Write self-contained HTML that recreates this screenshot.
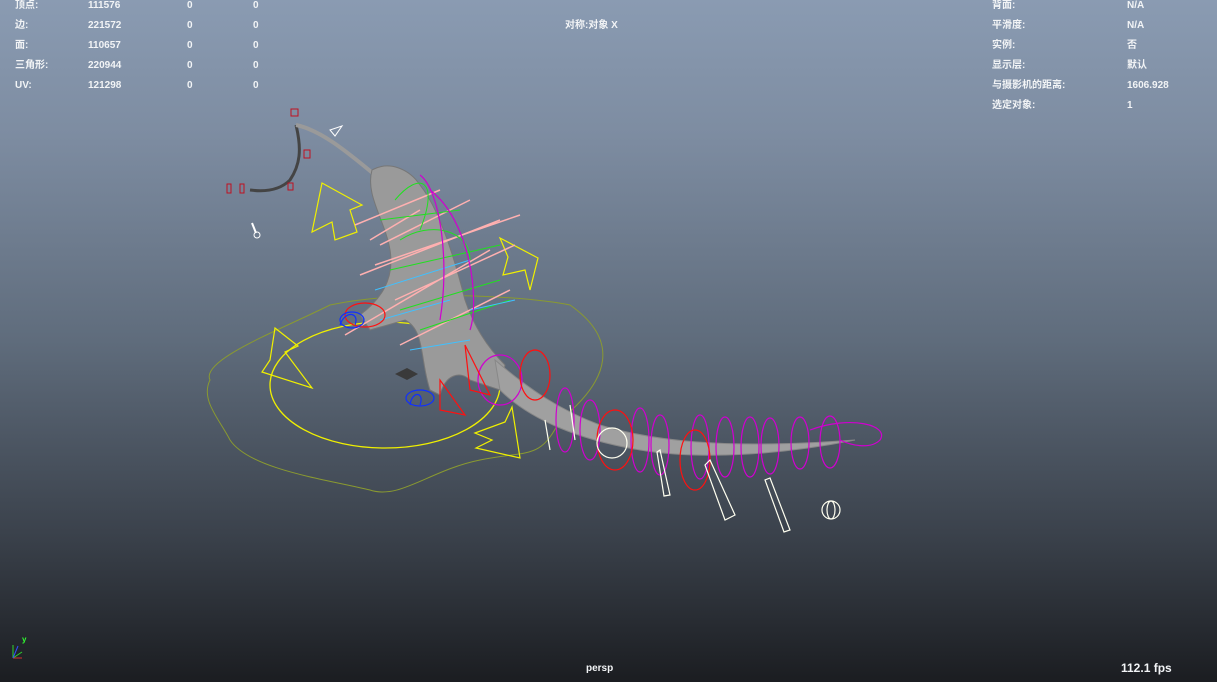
<!DOCTYPE html>
<html><head><meta charset="utf-8"><style>
html,body{margin:0;padding:0}
body{width:1217px;height:682px;overflow:hidden;position:relative;background:linear-gradient(#8a9bb2 0%,#7d8ca1 20%,#5f6c7c 50%,#3b424c 78%,#1b1d21 100%);font-family:"Liberation Sans","Noto Sans CJK SC",sans-serif;font-size:10px;font-weight:bold;color:#f2f4f6}
.t{position:absolute;white-space:nowrap;line-height:12px}
</style></head><body>
<div class="t" style="left:15px;top:0">顶点:</div><div class="t" style="left:88px;top:0">111576</div><div class="t" style="left:187px;top:0">0</div><div class="t" style="left:253px;top:0">0</div>
<div class="t" style="left:15px;top:20px">边:</div><div class="t" style="left:88px;top:20px">221572</div><div class="t" style="left:187px;top:20px">0</div><div class="t" style="left:253px;top:20px">0</div>
<div class="t" style="left:15px;top:40px">面:</div><div class="t" style="left:88px;top:40px">110657</div><div class="t" style="left:187px;top:40px">0</div><div class="t" style="left:253px;top:40px">0</div>
<div class="t" style="left:15px;top:60px">三角形:</div><div class="t" style="left:88px;top:60px">220944</div><div class="t" style="left:187px;top:60px">0</div><div class="t" style="left:253px;top:60px">0</div>
<div class="t" style="left:15px;top:80px">UV:</div><div class="t" style="left:88px;top:80px">121298</div><div class="t" style="left:187px;top:80px">0</div><div class="t" style="left:253px;top:80px">0</div>
<div class="t" style="left:565px;top:20px">对称:对象 X</div>
<div class="t" style="left:992px;top:0">背面:</div><div class="t" style="left:1127px;top:0">N/A</div>
<div class="t" style="left:992px;top:20px">平滑度:</div><div class="t" style="left:1127px;top:20px">N/A</div>
<div class="t" style="left:992px;top:40px">实例:</div><div class="t" style="left:1127px;top:40px">否</div>
<div class="t" style="left:992px;top:60px">显示层:</div><div class="t" style="left:1127px;top:60px">默认</div>
<div class="t" style="left:992px;top:80px">与摄影机的距离:</div><div class="t" style="left:1127px;top:80px">1606.928</div>
<div class="t" style="left:992px;top:100px">选定对象:</div><div class="t" style="left:1127px;top:100px">1</div>
<div class="t" style="left:586px;top:663px">persp</div>
<div class="t" style="left:1121px;top:662px;font-size:12px">112.1 fps</div>
<svg width="1217" height="682" style="position:absolute;left:0;top:0" fill="none">
<path d="M13 658V645M13 658L22 652" stroke="#30d030" stroke-width="1"/><path d="M13 658H22" stroke="#d03030"/><path d="M13 658L18 646" stroke="#3050ff"/>
<text x="22" y="642" fill="#30ff30" font-size="8" font-family="Liberation Sans">y</text>
<path d="M210 380C200 360 280 330 330 305C400 290 520 295 570 305C620 340 610 380 560 420C540 460 530 450 480 460C430 470 400 500 370 490C330 480 250 470 230 440C220 420 200 400 210 380Z" stroke="#8a9a30" stroke-width="1"/>
<ellipse cx="385" cy="385" rx="115" ry="63" stroke="#f0f000" stroke-width="1.3"/>
<path d="M322 183L362 205L350 210L357 232L335 240L332 222L312 232ZM500 238L538 258L530 290L525 270L503 275L508 257ZM275 328L298 346L285 352L312 388L262 372L270 360ZM475 433L505 422L512 407L520 458L476 448L492 440Z" stroke="#f0f000" stroke-width="1.2"/>
<path d="M296 125C302 150 300 165 290 180C280 190 265 192 250 190" stroke="#444" stroke-width="3"/>
<path d="M296 125C320 130 345 150 375 175" stroke="#9a9a9a" stroke-width="4"/>
<g stroke="#c01020" stroke-width="1"><rect x="291" y="109" width="7" height="7"/><rect x="227" y="184" width="4" height="9"/><rect x="240" y="184" width="4" height="9"/><rect x="304" y="150" width="6" height="8"/><rect x="288" y="183" width="5" height="7"/></g>
<path d="M330 130L342 126L335 136Z" stroke="#fff"/><path d="M252 223L256 233" stroke="#fff" stroke-width="2"/><circle cx="257" cy="235" r="3" stroke="#fff"/>
<path d="M372 170C390 160 410 170 420 185C440 210 455 260 465 300C475 330 490 350 505 365L500 390L470 380C460 370 445 375 440 395L430 390C420 360 425 330 405 320L370 330L360 315C380 300 395 280 390 250C385 220 365 195 372 170Z" fill="#9a9a9a" stroke="#777"/>
<path d="M495 360C530 390 560 410 600 425C650 440 720 450 855 440C780 455 700 460 640 450C580 440 530 420 500 390Z" fill="#a0a0a0" stroke="#888"/>
<g stroke="#ffb0b0" stroke-width="1.5">
<path d="M360 275L500 220M380 245L470 200M345 335L490 250M395 300L515 245M400 345L510 290M370 240L420 210M355 225L440 190M375 265L520 215"/></g>
<g stroke="#20e020" stroke-width="1"><path d="M380 220L460 210M390 270L500 245M400 310L500 280M420 330L510 300M395 200C420 170 440 180 420 230M400 240C430 220 470 230 470 260"/></g>
<g stroke="#40c0ff" stroke-width="1"><path d="M375 290L470 260M380 320L450 300M410 350L470 340M470 310L515 300"/></g>
<g stroke="#d000d0" stroke-width="1.2">
<path d="M420 175C440 190 450 260 440 320M430 190C470 220 480 300 470 330"/>
<ellipse cx="565" cy="420" rx="9" ry="32"/><ellipse cx="590" cy="430" rx="10" ry="30"/>
<ellipse cx="640" cy="440" rx="9" ry="32"/><ellipse cx="660" cy="445" rx="9" ry="30"/>
<ellipse cx="700" cy="447" rx="9" ry="32"/><ellipse cx="725" cy="447" rx="9" ry="30"/>
<ellipse cx="750" cy="447" rx="9" ry="30"/><ellipse cx="770" cy="446" rx="9" ry="28"/>
<ellipse cx="800" cy="443" rx="9" ry="26"/><ellipse cx="830" cy="442" rx="10" ry="26"/>
<path d="M810 430C850 415 890 425 880 440C870 450 850 445 840 440"/><ellipse cx="500" cy="380" rx="22" ry="25"/></g>
<g stroke="#ff1010" stroke-width="1.2"><ellipse cx="365" cy="315" rx="20" ry="12"/><ellipse cx="535" cy="375" rx="15" ry="25"/><ellipse cx="615" cy="440" rx="18" ry="30"/><ellipse cx="695" cy="460" rx="15" ry="30"/><path d="M440 380L465 415L440 410ZM465 345L490 395L470 390Z"/></g>
<g stroke="#1030ff" stroke-width="1.2"><ellipse cx="352" cy="320" rx="12" ry="8"/><ellipse cx="420" cy="398" rx="14" ry="8"/><path d="M340 325C345 310 360 312 355 325M410 405C412 390 425 392 420 405"/></g>
<g stroke="#fffff0" stroke-width="1.2"><circle cx="612" cy="443" r="15"/><path d="M660 450L670 495L664 496L657 452ZM710 460L735 515L725 520L705 465ZM770 478L790 530L784 532L765 480ZM570 405L575 440M545 420L550 450"/><circle cx="831" cy="510" r="9"/><ellipse cx="831" cy="510" rx="4" ry="9"/></g>
<path d="M395 374L407 368L418 374L407 380Z" fill="#3a3a3a"/>
</svg>
</body></html>
